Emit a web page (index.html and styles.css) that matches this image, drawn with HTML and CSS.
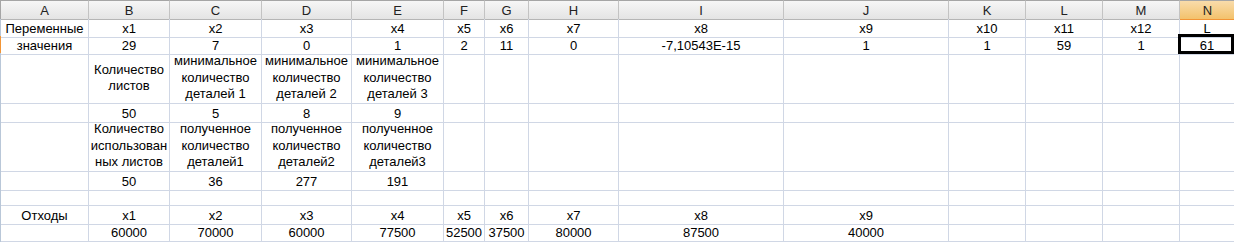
FILE: index.html
```html
<!DOCTYPE html>
<html lang="ru">
<head>
<meta charset="utf-8">
<title>Лист1</title>
<link rel="stylesheet" href="styles.css">
</head>
<body>
<div class="sheet">
  <div class="row head">
    <div class="rh"></div>
    <div class="ch">A</div><div class="ch">B</div><div class="ch">C</div><div class="ch">D</div><div class="ch">E</div><div class="ch">F</div><div class="ch">G</div><div class="ch">H</div><div class="ch">I</div><div class="ch">J</div><div class="ch">K</div><div class="ch">L</div><div class="ch">M</div><div class="ch sel">N</div>
  </div>
  <div class="row">
    <div class="rh"></div>
    <div class="c">Переменные</div><div class="c">x1</div><div class="c">x2</div><div class="c">x3</div><div class="c">x4</div><div class="c">x5</div><div class="c">x6</div><div class="c">x7</div><div class="c">x8</div><div class="c">x9</div><div class="c">x10</div><div class="c">x11</div><div class="c">x12</div><div class="c">L</div>
  </div>
  <div class="row">
    <div class="rh on"></div>
    <div class="c">значения</div><div class="c">29</div><div class="c">7</div><div class="c">0</div><div class="c">1</div><div class="c">2</div><div class="c">11</div><div class="c">0</div><div class="c">-7,10543E-15</div><div class="c">1</div><div class="c">1</div><div class="c">59</div><div class="c">1</div><div class="c">61</div>
  </div>
  <div class="row tall">
    <div class="rh"></div>
    <div class="c"></div><div class="c">Количество<br>листов</div><div class="c">минимальное<br>количество<br>деталей 1</div><div class="c">минимальное<br>количество<br>деталей 2</div><div class="c">минимальное<br>количество<br>деталей 3</div><div class="c"></div><div class="c"></div><div class="c"></div><div class="c"></div><div class="c"></div><div class="c"></div><div class="c"></div><div class="c"></div><div class="c"></div>
  </div>
  <div class="row">
    <div class="rh"></div>
    <div class="c"></div><div class="c">50</div><div class="c">5</div><div class="c">8</div><div class="c">9</div><div class="c"></div><div class="c"></div><div class="c"></div><div class="c"></div><div class="c"></div><div class="c"></div><div class="c"></div><div class="c"></div><div class="c"></div>
  </div>
  <div class="row tall">
    <div class="rh"></div>
    <div class="c"></div><div class="c">Количество<br>использован<br>ных листов</div><div class="c">полученное<br>количество<br>деталей1</div><div class="c">полученное<br>количество<br>деталей2</div><div class="c">полученное<br>количество<br>деталей3</div><div class="c"></div><div class="c"></div><div class="c"></div><div class="c"></div><div class="c"></div><div class="c"></div><div class="c"></div><div class="c"></div><div class="c"></div>
  </div>
  <div class="row">
    <div class="rh"></div>
    <div class="c"></div><div class="c">50</div><div class="c">36</div><div class="c">277</div><div class="c">191</div><div class="c"></div><div class="c"></div><div class="c"></div><div class="c"></div><div class="c"></div><div class="c"></div><div class="c"></div><div class="c"></div><div class="c"></div>
  </div>
  <div class="row">
    <div class="rh"></div>
    <div class="c"></div><div class="c"></div><div class="c"></div><div class="c"></div><div class="c"></div><div class="c"></div><div class="c"></div><div class="c"></div><div class="c"></div><div class="c"></div><div class="c"></div><div class="c"></div><div class="c"></div><div class="c"></div>
  </div>
  <div class="row">
    <div class="rh"></div>
    <div class="c">Отходы</div><div class="c">x1</div><div class="c">x2</div><div class="c">x3</div><div class="c">x4</div><div class="c">x5</div><div class="c">x6</div><div class="c">x7</div><div class="c">x8</div><div class="c">x9</div><div class="c"></div><div class="c"></div><div class="c"></div><div class="c"></div>
  </div>
  <div class="row">
    <div class="rh"></div>
    <div class="c"></div><div class="c">60000</div><div class="c">70000</div><div class="c">60000</div><div class="c">77500</div><div class="c">52500</div><div class="c">37500</div><div class="c">80000</div><div class="c">87500</div><div class="c">40000</div><div class="c"></div><div class="c"></div><div class="c"></div><div class="c"></div>
  </div>
  <div class="row last">
    <div class="rh"></div>
    <div class="c"></div><div class="c"></div><div class="c"></div><div class="c"></div><div class="c"></div><div class="c"></div><div class="c"></div><div class="c"></div><div class="c"></div><div class="c"></div><div class="c"></div><div class="c"></div><div class="c"></div><div class="c"></div>
  </div>
  <div class="selection"></div>
</div>
</body>
</html>
```

FILE: styles.css
```css
html, body {
  margin: 0;
  padding: 0;
  background: #ffffff;
  overflow: hidden;
}

.sheet {
  position: relative;
  width: 1234px;
  height: 242px;
  overflow: hidden;
  font-family: "Liberation Sans", Arial, sans-serif;
  font-size: 13px;
  color: #000000;
}

.row {
  display: grid;
  grid-template-columns: 1px 88px 81px 92px 90px 92px 41px 44px 90px 165px 165px 77px 77px 77px 55px;
  height: 17px;
}

.row.tall {
  height: 51px;
}

.row.head {
  height: 19px;
}

.row.last {
  height: 3px;
}

.rh {
  background: #b9c7d8;
}

.rh.on {
  background: #f29536;
}

.head .rh {
  background: #a5a5a5;
}

.ch {
  box-sizing: border-box;
  border-top: 1px solid #a5a5a5;
  border-right: 1px solid #c3c3c3;
  border-bottom: 1px solid #b5b5b5;
  background: linear-gradient(#f6f6f6, #e4e4e4);
  display: flex;
  align-items: center;
  justify-content: center;
  font-size: 13px;
  line-height: 17px;
  color: #222222;
  padding-top: 1px;
}

.ch.sel {
  background: linear-gradient(#f9dcab, #f3c26c);
  border-right: none;
  border-bottom-color: #f29536;
}

.c {
  box-sizing: border-box;
  border-right: 1px solid #d0d7e5;
  border-bottom: 1px solid #d0d7e5;
  display: flex;
  align-items: center;
  justify-content: center;
  text-align: center;
  white-space: nowrap;
  line-height: 17px;
  padding-top: 1px;
}

.last .c {
  border-bottom: none;
}

.tall .c {
  line-height: 16.5px;
  padding-top: 0;
}

.selection {
  position: absolute;
  left: 1178px;
  top: 34px;
  width: 56px;
  height: 20px;
  box-sizing: border-box;
  border: 3px solid #000000;
}
```
